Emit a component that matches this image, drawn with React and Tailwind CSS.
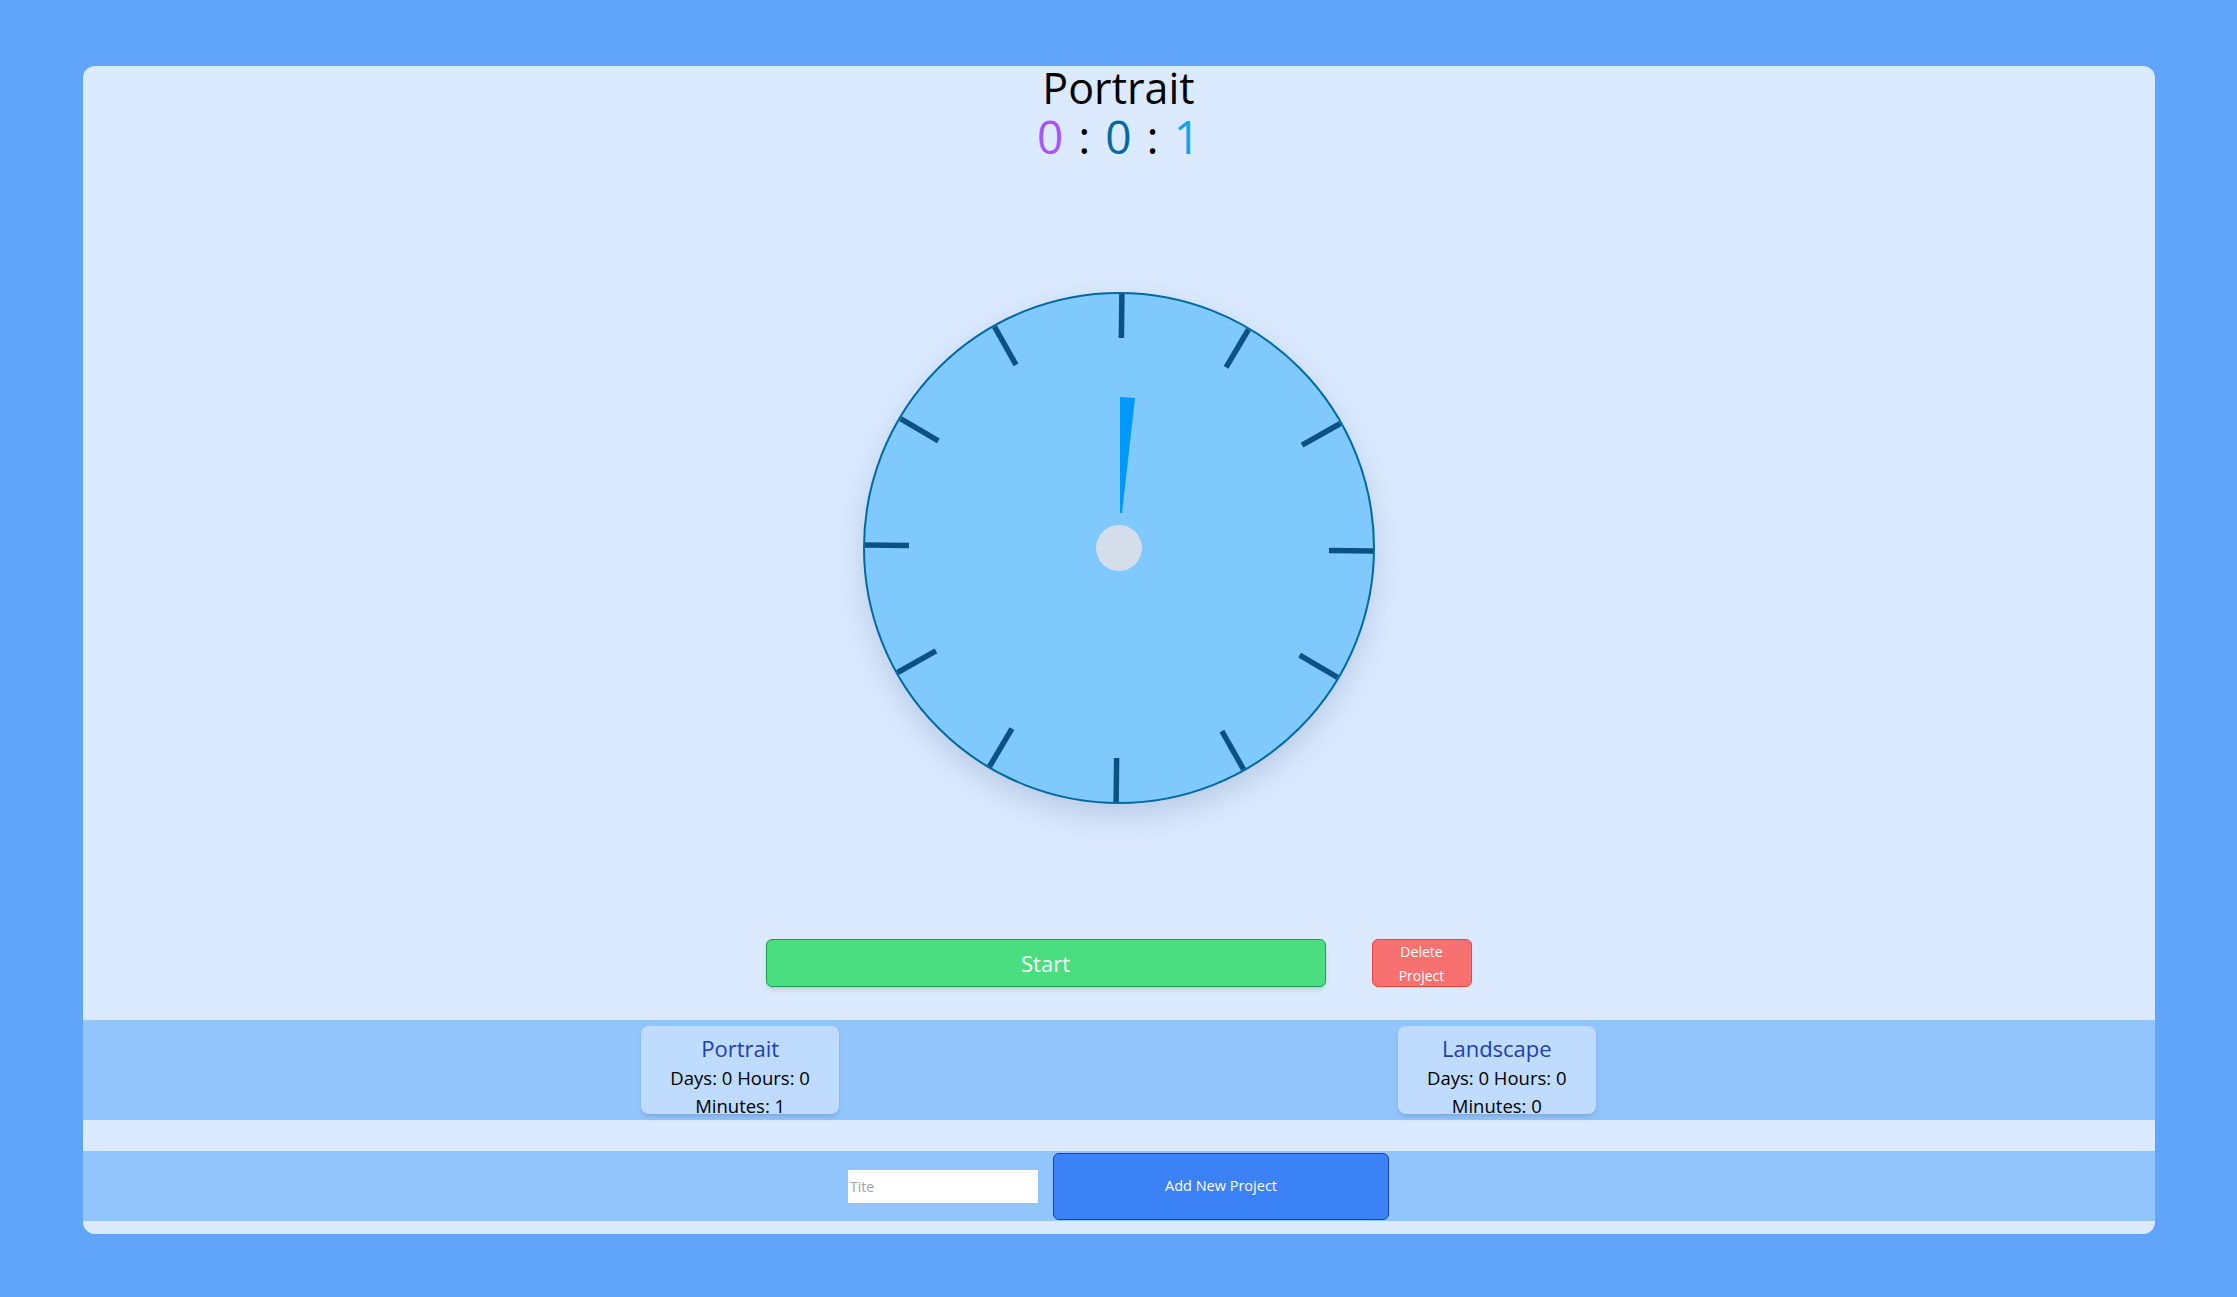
import React, { useState } from 'react';

const projects = [
  { id: 1, title: 'Portrait', days: 0, hours: 0, minutes: 1 },
  { id: 2, title: 'Landscape', days: 0, hours: 0, minutes: 0 },
];

function Clock() {
  const ticks = Array.from({ length: 12 }, (_, i) => i * 30 + 0.65);

  return (
    <div className="relative w-[512px] h-[512px] rounded-full border-2 border-[#0369a1] bg-[#7fc9fd] shadow-[0_12px_30px_rgba(30,64,120,0.18)]">
      <svg className="absolute -left-[2px] -top-[2px]" width="512" height="512" viewBox="0 0 512 512">
        {ticks.map((deg) => (
          <line
            key={deg}
            x1="256"
            y1="2"
            x2="256"
            y2="46"
            stroke="#0b5184"
            strokeWidth="5.5"
            transform={`rotate(${deg} 256 256)`}
          />
        ))}
        <polygon points="257,105 272,106 259,221 257,221" fill="#0098fb" />
        <circle cx="256" cy="256" r="23" fill="#d4deeb" />
      </svg>
    </div>
  );
}

export default function App() {
  const [title, setTitle] = useState('');

  return (
    <div className="min-h-screen bg-[#60a5fa] py-[66px] font-['Open_Sans',sans-serif]">
      <div className="mx-auto w-[2072px] rounded-xl bg-[#dbeafe] flex flex-col items-center">
        <h1 className="text-[43px] leading-[44px] text-black">Portrait</h1>
        <div className="mt-[1px] text-[46px] leading-[50px] text-black [word-spacing:3px]">
          <span className="text-[#a855f7]">0</span> : <span className="text-[#0369a1]">0</span> :{' '}
          <span className="text-[#0ea5e9]">1</span>
        </div>

        <div className="mt-[131px]">
          <Clock />
        </div>

        <div className="mt-[135px] flex items-center gap-[46px]">
          <button className="w-[560px] h-12 rounded-md border border-[#16a34a] bg-[#4ade80] text-white text-[22px] shadow-md">
            Start
          </button>
          <button className="w-[100px] h-12 rounded-md border border-[#ef4444] bg-[#f87171] px-3 text-white text-sm leading-6">
            Delete Project
          </button>
        </div>

        <div className="mt-[33px] w-full h-[100px] bg-[#93c5fd] flex justify-evenly items-center">
          {projects.map((p) => (
            <div key={p.id} className="w-[198px] h-[88px] rounded-lg bg-[#bfdbfe] shadow-md pt-[6px] px-2 text-center">
              <h3 className="text-[22px] leading-8 text-[#1e40af]">{p.title}</h3>
              <p className="text-[18.5px] leading-7 text-black">
                Days: {p.days} Hours: {p.hours} Minutes: {p.minutes}
              </p>
            </div>
          ))}
        </div>

        <div className="mt-[31px] mb-[13px] w-full h-[70px] bg-[#93c5fd] flex justify-center items-center gap-[15px]">
          <input
            type="text"
            placeholder="Tite"
            value={title}
            onChange={(e) => setTitle(e.target.value)}
            className="w-[190px] h-[33px] bg-white pl-0.5 text-sm text-black placeholder:text-[#9ca3af] outline-none"
          />
          <button className="w-[336px] h-[67px] rounded-md border border-[#1e40af] bg-[#3b82f6] text-white text-[14.5px]">
            Add New Project
          </button>
        </div>
      </div>
    </div>
  );
}
